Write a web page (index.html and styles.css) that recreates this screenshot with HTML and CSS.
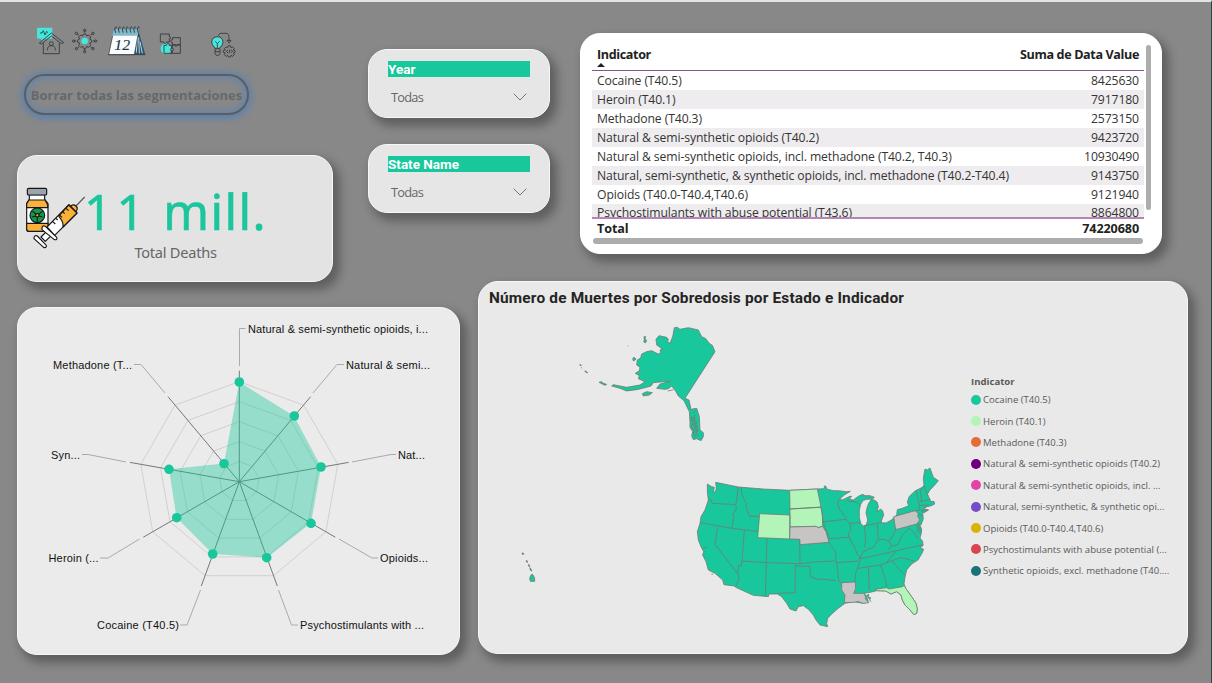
FILE: index.html
```html
<!DOCTYPE html>
<html lang="es">
<head>
<meta charset="utf-8">
<title>Muertes por Sobredosis</title>
<link rel="stylesheet" href="styles.css">
</head>
<body>
<main class="dashboard">
  <header class="toolbar">
    <nav class="icons">
      <svg class="icon" width="29" height="30" viewBox="108 78 87 90">
        <rect x="111" y="83" width="46" height="33" rx="3" fill="#45e6db"/><path d="M122 116l7 8 5-8z" fill="#45e6db"/>
        <path d="M120 99h6l4-7 5 13 5-11 3 4" class="ln"/>
        <path d="M118 129l36-30 37 29-7 3-30-23-30 24zM130 128v33h48v-32" class="ln"/>
        <circle cx="154" cy="131" r="6" class="ln"/><path d="M142 151c1-13 7-14 12-14s12 2 12 14" class="ln"/>
      </svg>
      <svg class="icon network" width="27" height="30" viewBox="213 78 81 90">
        <path d="M254 98v-7M254 147v7M229 123h-7M279 123h7M237 106l-6-5M272 106l5-5M237 140l-6 6M272 140l5 6" class="ln"/>
        <path d="M248 108l2-6h8l2 6 6-3 6 6-3 6 6 3v7l-6 2 3 7-6 6-6-3-2 6h-8l-2-6-6 3-6-6 3-7-6-2v-7l6-3-3-6 6-6z" class="ln"/>
        <circle cx="254" cy="123" r="10" fill="#45e6db"/>
        <g class="ln"><circle cx="254" cy="91" r="3.5"/><circle cx="254" cy="155" r="3.5"/><circle cx="221" cy="123" r="3.5"/><circle cx="287" cy="123" r="3.5"/><circle cx="229" cy="100" r="3.5"/><circle cx="279" cy="100" r="3.5"/><circle cx="229" cy="146" r="3.5"/><circle cx="279" cy="146" r="3.5"/></g>
      </svg>
      <svg class="icon calendar" width="39" height="30" viewBox="321 78 117 90">
        <path d="M414 88l22 76h-34z" fill="#2c5368"/><path d="M412 108l-3 50M416 112l2 48M420 125l7 35" stroke="#b6dbe8" stroke-width="3"/>
        <path d="M342 88h75l-14 76h-77z" fill="#fafdff" stroke="#333" stroke-width="2"/>
        <path d="M341 88h76l-4 19h-77z" fill="#83b8ca"/>
        <path d="M347 98c-6-15 0-19 4-16M358 98c-6-15 0-19 4-16M370 98c-6-15 0-19 4-16M381 98c-6-15 0-19 4-16M393 98c-6-15 0-19 4-16M404 98c-6-15 0-19 4-16M415 98c-6-15 0-19 4-16" fill="none" stroke="#213d4b" stroke-width="3"/>
        <path d="M324 164h112" stroke="#333" stroke-width="2"/>
        <text x="343" y="151" class="cal-day" textLength="47" lengthAdjust="spacingAndGlyphs">12</text>
      </svg>
      <svg class="icon puzzle" width="24" height="30" viewBox="477 78 72 90">
        <circle cx="498" cy="146" r="16" fill="#45e6db"/>
        <path d="M481 102h27v9c5-3 5 8 0 5v10h-9c2 6-10 6-7 0h-11zM518 113h23v21h-9c2 6-10 6-7 0h-8v-7c-6 2-6-9 0-7zM517 135h24v25h-25v-8c6 2 6-9 0-7zM492 136h8c-2-7 10-7 7 0h8v9c-5-2-5 9 0 7v8h-23z" class="ln"/>
      </svg>
      <svg class="icon bulb" width="26" height="32" viewBox="630 78 78 96">
        <circle cx="652" cy="127" r="16" fill="#45e6db"/>
        <path d="M645 146c-1-5-10-10-10-20 0-10 8-16 17-16s17 6 17 16c0 10-9 15-10 20zM645 147v14l4 5h7l4-5v-14M645 155h14M646 124l6 7 7-7M652 131v14M656 107c0-7 5-7 10-7h12c8 0 9 6 9 12v10M681 121l6 8 6-8z" class="ln"/>
        <path d="M683 143l2-6h6l2 6 5-2 5 5-3 4 5 2v5l-5 2 3 5-5 5-5-3-2 5h-6l-2-5-5 3-5-5 3-5-6-2v-5l6-2-3-4 5-5zM684 150l-5 4 5 5M693 150l5 4-5 5M690 148l-3 12" class="ln"/>
      </svg>
    </nav>
    <button class="clear">Borrar todas las segmentaciones</button>
  </header>

  <section class="card kpi">
    <svg class="kpi-icon" width="62" height="64" viewBox="72 138 186 192">
      <g stroke="#16171b" stroke-width="3.5" stroke-linejoin="round">
        <path d="M88 164v14l-8 13v76q0 7 7 7h50q7 0 7-7v-76l-10-13v-14z" fill="#fff"/>
        <path d="M87 180h48l8 14v9H80v-12z" fill="#fbb03a"/>
        <path d="M80 250h64v17q0 7-7 7H87q-7 0-7-7z" fill="#fbb03a"/>
        <rect x="82" y="145" width="58" height="20" rx="4" fill="#9aa4ae"/>
        <circle cx="112" cy="226" r="22" fill="#13994a"/>
        <path d="M112 226l-14-12M112 226l15-12M112 226v19M97 231l15-5 15 5" fill="none"/>
        <circle cx="112" cy="226" r="5" fill="#fbb03a"/>
        <path d="M228 198l26-27" fill="none" stroke="#555a62"/>
        <path d="M209 205l4-8q8-5 15 1t1 15l-7 5z" fill="#fbb03a"/>
        <path d="M207 194l24 25-67 67-23-25z" fill="#fff"/>
        <path d="M206 195l25 24-42 42c2-20-7-22-13-33z" fill="#fbb03a"/>
        <path d="M158 245l8 7M168 235l5 5M178 225l8 7M188 215l6 6M198 205l8 7" fill="none"/>
        <path d="M141 273l13 13-18 18-13-13z" fill="#fff"/>
        <path d="M126 264q2-9 10-5l34 33q3 9-7 7l-37-30z" fill="#fff"/>
        <path d="M102 292q3-8 10-4l27 28q1 9-8 6l-29-26z" fill="#fff"/>
      </g>
    </svg>
    <div class="kpi-body">
      <div class="kpi-value"><span class="kpi-digits">11</span> mill.</div>
      <div class="kpi-label">Total Deaths</div>
    </div>
  </section>

  <aside class="slicers">
    <section class="card slicer">
      <h2>Year</h2>
      <div class="select"><span>Todas</span><svg width="14" height="8" viewBox="0 0 14 8"><path d="M.7.7L7 7 13.3.7"/></svg></div>
    </section>
    <section class="card slicer">
      <h2>State Name</h2>
      <div class="select"><span>Todas</span><svg width="14" height="8" viewBox="0 0 14 8"><path d="M.7.7L7 7 13.3.7"/></svg></div>
    </section>
  </aside>

  <section class="card table-card">
    <div class="table">
      <div class="thead"><div><b class="h-ind">Indicator</b><i class="sort"></i></div><b class="h-val">Suma de Data Value</b></div>
      <div class="tbody">
        <div class="row"><span>Cocaine (T40.5)</span><span>8425630</span></div>
        <div class="row"><span>Heroin (T40.1)</span><span>7917180</span></div>
        <div class="row"><span>Methadone (T40.3)</span><span>2573150</span></div>
        <div class="row"><span>Natural &amp; semi-synthetic opioids (T40.2)</span><span>9423720</span></div>
        <div class="row"><span>Natural &amp; semi-synthetic opioids, incl. methadone (T40.2, T40.3)</span><span>10930490</span></div>
        <div class="row"><span>Natural, semi-synthetic, &amp; synthetic opioids, incl. methadone (T40.2-T40.4)</span><span>9143750</span></div>
        <div class="row"><span>Opioids (T40.0-T40.4,T40.6)</span><span>9121940</span></div>
        <div class="row last"><span>Psychostimulants with abuse potential (T43.6)</span><span>8864800</span></div>
      </div>
      <div class="tfoot"><b>Total</b><b>74220680</b></div>
      <div class="hbar"></div>
    </div>
    <div class="vbar"></div>
  </section>

  <section class="card radar">
    <svg width="443" height="347" viewBox="17 307 443 347">
      <defs><polygon id="ring" points="0,-100 64.3,-76.6 98.5,-17.4 86.6,50 34.2,94 -34.2,94 -86.6,50 -98.5,-17.4 -64.3,-76.6"/></defs>
      <g transform="translate(239.3 481.7)">
        <g class="rings"><use href="#ring"/><use href="#ring" transform="scale(.8)"/><use href="#ring" transform="scale(.6)"/><use href="#ring" transform="scale(.4)"/><use href="#ring" transform="scale(.2)"/></g>
        <path class="axes" d="M0 0V-111M0 0L71.3 -85M0 0L109.3 -19.3M0 0L96 55.5M0 0L38 104.3M0 0L-38 104.3M0 0L-96 55.5M0 0L-109.3 -19.3M0 0L-71.3 -85"/>
      </g>
      <polygon class="area" points="239.3,382 294,416 321,467 311,523 267,557.5 212.7,554 176.5,517.5 169,469.3 224,463.5"/>
      <g class="dots"><circle cx="239.3" cy="382" r="4.8"/><circle cx="294.3" cy="416" r="4.8"/><circle cx="321" cy="467" r="4.8"/><circle cx="311" cy="523.3" r="4.8"/><circle cx="266.7" cy="557.7" r="4.8"/><circle cx="212.7" cy="554" r="4.8"/><circle cx="176.7" cy="517.7" r="4.8"/><circle cx="169" cy="469.3" r="4.8"/><circle cx="224" cy="463.7" r="4.8"/></g>
      <path class="leaders" d="M239.5 366V328.5H245.500M313 393L337 364.500H344M352 462L391 454.500H396M339 539L372 558H378M278.500 590L291.500 625H298M200.500 590L187 625H180M139.500 539L108 558H100M126 462L88 454.500H82M165 393L141 364.500H134"/>
      <g class="labels">
        <text x="248" y="333" textLength="180">Natural &amp; semi-synthetic opioids, i...</text>
        <text x="346" y="369" textLength="84">Natural &amp; semi...</text>
        <text x="398" y="459" textLength="27">Nat...</text>
        <text x="380" y="562" textLength="48">Opioids...</text>
        <text x="300" y="629" textLength="124">Psychostimulants with ...</text>
        <text x="97" y="629" textLength="82">Cocaine (T40.5)</text>
        <text x="48.500" y="562" textLength="50">Heroin (...</text>
        <text x="51" y="459" textLength="29">Syn...</text>
        <text x="53" y="369" textLength="79">Methadone (T...</text>
      </g>
    </svg>
  </section>

  <section class="card map">
    <h2>Número de Muertes por Sobredosis por Estado e Indicador</h2>
    <div class="map-body">
      <svg width="482" height="338" viewBox="478 315 482 338">
        <g class="land" transform="translate(480 280) scale(.33333)">
          <path d="M583 143L592 142 600 148 625 143 655 150 665 170 676 175 690 192 697 196 705 215 615 355 627 360 633 388 650 385 658 410 660 450 670 458 670 470 663 482 650 476 640 479 635 468 638 455 630 442 630 425 628 395 612 362 595 348 585 330 575 318 565 326 555 328 530 325 540 312 570 304 550 305 520 308 513 318 500 322 470 329 440 333 420 325 395 318 400 314 440 322 480 315 495 305 475 296 478 287 466 280 478 272 480 262 470 255 472 240 482 234 485 222 500 215 515 212 535 222 542 218 540 210 548 208 530 195 528 178 537 167 560 172 565 178 563 185 570 190 578 170z"/>
          <path d="M487 341L500 335 517 338 508 345 490 348zM458 235l5-3 5 6-8 5zM492 170h5l-2 7 5 4-3 7-6-2 2-6zM357 307l8-2 5 5 10 3-5 3-12-6zM299 254l5 1-2 3zM303 263l3 1M314 273l5 1 4 5-4-1zM443 197l2 1M563 333l18-4M126 819l4 0 1 4-4 0zM139 841l4 3-1 4-3-3zM146 853l3 5-1 3-3-6zM150 863l6 9-3 1-3-6zM152 887l4-5 5 6 3 7v9h-13l-2-9z"/>
          <path class="detail" d="M638 410l-5 12 6 8-4 12 7 8-3 10 8 4-5 9M645 405l-3 14 8 8-4 13 7 10-4 12 8 8M638 400l9-8M632 412l14 4-10 6 14 5-12 6 15 6-12 7 12 6-13 6"/>
        </g>
        <g class="land" transform="translate(690 460) scale(.33333)">
          <path d="M52 72L65 80 73 82 70 97 76 96 79 85 77 67 145 81 220 87 300 91 382 87 403 86 403 78 408 79 410 87 430 92 445 92 470 95 481 94 463 105 449 118 456 120 467 115 480 109 485 109 478 118 490 120 505 109 518 103 525 107 540 107 553 112 548 117 530 118 520 121 512 133 508 150 508 172 512 190 520 198 529 194 533 180 528 158 532 140 536 130 543 119 553 120 562 127 565 140 561 156 572 147 578 153 581 165 575 180 573 188 588 189 603 181 620 166 622 149 637 145 656 137 652 126 658 109 675 93 697 82 702 75 700 55 705 27 712 30 720 24 730 52 745 62 735 74 720 90 712 103 720 118 723 125 732 124 734 132 722 138 711 140 700 147 716 150 698 160 700 176 693 195 688 192 695 207 694 220 690 234 698 244 699 257 690 263 701 268 696 280 684 300 665 312 650 330 645 352 642 372 647 385 665 410 678 430 682 447 680 460 672 464 660 450 645 435 637 420 633 405 620 395 603 402 587 393 560 392 545 396 523 400 530 412 535 425 520 430 490 425 465 430 445 445 425 462 413 475 410 490 413 500 390 495 378 480 370 465 355 448 340 437 325 440 318 453 300 447 290 430 275 410 262 402 237 402 235 410 190 406 137 382 133 378 102 374 98 360 75 340 55 330 48 305 38 285 41 275 33 260 25 240 22 215 30 190 33 170 45 150 55 120 52 95z"/>
          <path class="heroin" d="M209 161L300 165 299 237 203 233zM299 91L382 87 393 141 300 147zM300 147L393 142 397 160 398 198 385 203 378 199 300 201zM555 388L590 383 597 387 637 380 643 376 647 385 665 410 678 430 682 447 680 460 672 464 660 450 645 435 637 420 633 405 620 395 603 402 587 393 562 392z"/>
          <path class="none" d="M300 201L378 199 385 203 398 199 408 215 417 247 330 254 329 238 299 237zM611 170L675 152 685 160 683 168 689 180 680 192 617 209zM455 368L496 366 497 385 491 400 521 400 527 410 526 416 536 428 520 430 505 425 490 427 463 428 465 405 455 390z"/>
          <path class="borders" d="M55 112L62 118 67 130 137 134M145 81L139 125 137 134 139 145 128 165 132 170 126 205M30 188L126 205 203 214M154 82L155 102 165 125 170 130 168 140 178 168 207 170M83 201L75 253 143 341M163 211L156 303 153 318 146 316 143 341 148 355 137 380M156 303L227 308 330 311 375 306 435 303M231 236L229 309 226 409M329 238L330 311M316 311L315 398 262 400M316 318L360 319 361 350 380 357 400 358 437 362M417 247L425 260 437 275 438 303M393 142L400 185M447 118L443 135 450 150 467 172 468 178 400 185 404 200 420 236 475 232 483 240M468 178L480 192 483 208 475 220 477 232 487 250 497 268 500 280 510 292 510 303 503 325 497 340 495 366M480 190L513 188M437 303L443 308 505 303M440 305L444 340 446 362 455 368M523 198L527 240 523 262M526 197L562 190 575 186M562 190L565 238M508 297L520 275 535 268 550 262 563 240 580 238 597 243 610 225 618 205M508 297L550 288 700 254M503 325L570 315 605 303 630 293 650 297 673 303M590 308L600 295 618 275M607 303L625 325 645 345M535 322L538 390M572 315L587 360 590 383M470 122L500 127 510 135M597 243L605 258 623 255 637 225 650 212 658 205 675 222 683 235M605 258L595 270M678 93L687 130 690 150 675 152M697 82L692 95 695 125M702 78L708 95 715 108M690 125L720 119M690 137L716 134M705 136L706 144M685 160L697 168M680 194L687 220M684 190L692 215M45 275l-4-3M39 264l10-2"/>
          <path d="M64 342l5 1M693 152l19-3-8 8zM528 408l8-5-1 9 8 2-5 6 6 5"/>
        </g>
      </svg>
      <div class="legend">
        <h3>Indicator</h3>
        <ul>
          <li class="c1">Cocaine (T40.5)</li>
          <li class="c2">Heroin (T40.1)</li>
          <li class="c3">Methadone (T40.3)</li>
          <li class="c4">Natural &amp; semi-synthetic opioids (T40.2)</li>
          <li class="c5">Natural &amp; semi-synthetic opioids, incl. ...</li>
          <li class="c6">Natural, semi-synthetic, &amp; synthetic opi...</li>
          <li class="c7">Opioids (T40.0-T40.4,T40.6)</li>
          <li class="c8">Psychostimulants with abuse potential (...</li>
          <li class="c9">Synthetic opioids, excl. methadone (T40....</li>
        </ul>
      </div>
    </div>
  </section>
</main>
</body>
</html>
```
FILE: styles.css
```css
* { box-sizing: border-box; }
body { margin: 0; overflow: hidden; font-family: "Open Sans", "Noto Sans", sans-serif; }
h2, h3, ul { margin: 0; padding: 0; }
svg { display: block; }

.dashboard {
  display: grid;
  grid-template-columns: 316px 35px 92px 18px 71px 31px 582px 25px;
  grid-template-rows: 153px 126px 26px 347px;
  width: 1212px;
  height: 683px;
  padding-left: 17px;
  background: #888;
  border-top: 2px solid #e4e4e4;
  border-right: 1px solid #26494c;
}
.card {
  background: #e6e6e6;
  border: 1px solid #f7f7f7;
  border-radius: 20px;
  box-shadow: 5px 6px 10px 2px rgba(0, 0, 0, .3);
}

.toolbar { grid-area: 1 / 1; padding: 24px 0 0 7px; }
.icons { display: flex; align-items: flex-start; height: 48px; padding-left: 12px; }
.network { margin-left: 6px; }
.calendar { margin-left: 9px; }
.puzzle { margin-left: 13px; }
.bulb { margin-left: 27px; }
.ln { fill: none; stroke: #303439; stroke-width: 2.5; }
.cal-day { font: italic 46px "Liberation Serif", serif; fill: #203440; stroke: #203440; stroke-width: .4; }
.clear {
  display: block;
  width: 225px;
  height: 41px;
  padding: 0;
  border: 2px solid #5a5d63;
  border-radius: 21px;
  background: #888;
  box-shadow: 0 1px 7px 2px #5580b4, inset 0 0 8px 1px #5c83b0;
  color: #66686a;
  font: bold 12.95px "Open Sans", sans-serif;
  white-space: nowrap;
}

.kpi { grid-area: 2 / 1; display: grid; grid-template-columns: 66px 1fr 66px; height: 127px; border-radius: 20px; background: #e3e3e3; }
.kpi-icon { margin: 30px 0 0 6px; }
.kpi-body { display: flex; flex-direction: column; align-items: center; white-space: nowrap; padding-top: 20px; }
.kpi-value { height: 62px; color: #1bc69c; font: 49px/70px "Noto Sans", sans-serif; letter-spacing: 1.4px; -webkit-text-stroke: .6px #1bc69c; }
.kpi-digits { letter-spacing: 4.5px; }
.kpi-label { color: #666; font: 14.6px/28px "Noto Sans", sans-serif; letter-spacing: -.25px; }

.slicers { grid-area: 1 / 3 / 3 / 7; width: 182px; padding-top: 47px; display: flex; flex-direction: column; gap: 26px; }
.slicer { height: 69px; padding: 11px 18px 0 19px; border-radius: 19px; }
.slicer h2 { width: 142px; height: 16px; background: #18c79b; color: #fff; font: bold 13.5px/17px Roboto, sans-serif; }
.select { display: flex; justify-content: space-between; align-items: center; height: 24px; margin-top: 8px; padding: 0 4px 0 3px; color: #666; font-size: 12.8px; letter-spacing: -.75px; }
.select svg { fill: none; stroke: #777; stroke-width: 1; }

.table-card { grid-area: 1 / 7 / 3 / 8; height: 221px; margin-top: 31px; padding: 11px 10px 0 11px; display: flex; gap: 2px; background: #fff; border-color: #fff; }
.table { width: 552px; color: #353433; font-size: 12.2px; }
.thead { display: flex; justify-content: space-between; height: 26px; padding: 0 5px; border-bottom: 1px solid #84568f; color: #222; font: 12.6px/19px "Open Sans", sans-serif; letter-spacing: -.38px; }
.sort { display: block; width: 0; height: 0; margin-top: -1px; border: 4px solid transparent; border-top: 0; border-bottom-color: #222; }
.tbody { height: 148px; overflow: hidden; border-bottom: 2px solid #b387b4; letter-spacing: -.1px; }
.row { display: flex; justify-content: space-between; height: 19px; padding: 0 5px; line-height: 20px; white-space: nowrap; }
.row:nth-child(even) { background: #eeecee; }
.last { line-height: 18px; }
.tfoot { display: flex; justify-content: space-between; height: 19px; padding: 0 5px; color: #222; line-height: 20px; font-size: 12.6px; letter-spacing: -.1px; }
.hbar { width: 550px; height: 6px; margin-left: 1px; border-radius: 3px; background: #adadad; }
.vbar { width: 5px; height: 165px; border-radius: 3px; background: #adadad; }

.radar { grid-area: 4 / 1 / 5 / 4; background: #ebebeb; height: 348px; }
.radar svg { margin: -1px; }
.rings { fill: none; stroke: #d3cfd0; stroke-width: 1; }
#ring { vector-effect: non-scaling-stroke; }
.axes { fill: none; stroke: #777; stroke-width: 1; }
.area { fill: #18c79b; fill-opacity: .4; }
.dots { fill: #18c79b; }
.leaders { fill: none; stroke: #aaa; stroke-width: 1; }
.labels { font: 11px "Liberation Sans", Arial, sans-serif; fill: #111; }

.map { grid-area: 3 / 5 / 5 / 9; width: 710px; background: #e9e9e9; }
.map h2 { height: 33px; padding-left: 10px; color: #252423; font: bold 15.4px/32px Roboto, sans-serif; letter-spacing: .18px; }
.map-body { display: flex; }
.map-body > svg { flex: none; margin-left: -1px; }
.land { fill: #18c79b; stroke: #707b76; stroke-width: 2.4; stroke-linejoin: round; }
.heroin { fill: #b3f5b8; }
.none { fill: #c7c4c4; }
.borders, .detail { fill: none; }
.legend { padding: 60px 0 0 11px; color: #5a5a5a; white-space: nowrap; }
.legend h3 { font: bold 9.6px/14px "Open Sans", sans-serif; }
.legend ul { list-style: none; }
.legend li { display: flex; align-items: center; gap: 2px; height: 21.4px; font-size: 9.55px; }
.legend li::before { content: ""; width: 10px; height: 10px; border-radius: 50%; background: var(--c); }
.c1 { --c: #18c79b; }
.c2 { --c: #b3f5b8; }
.c3 { --c: #e66c37; }
.c4 { --c: #6b007b; }
.c5 { --c: #e044a7; }
.c6 { --c: #744ec2; }
.c7 { --c: #d9b300; }
.c8 { --c: #d64550; }
.c9 { --c: #197278; }
```
